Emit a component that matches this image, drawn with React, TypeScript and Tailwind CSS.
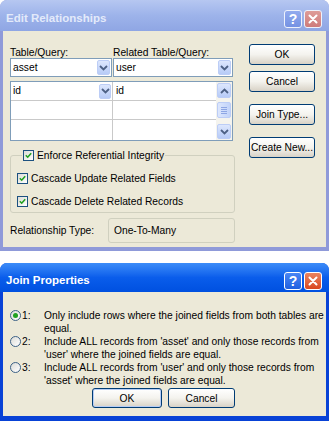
import React from 'react';

function Chevron({ up = false }: { up?: boolean }) {
  return (
    <svg width="9" height="6" viewBox="0 0 9 6">
      <path d={up ? 'M1 5 L4.5 1.5 L8 5' : 'M1 1 L4.5 4.5 L8 1'} fill="none" stroke="#4D6185" strokeWidth="1.8" />
    </svg>
  );
}

function ArrowBox({ up = false, className = '' }: { up?: boolean; className?: string }) {
  return (
    <div className={`rounded-[2px] border border-[#BCCDF6] bg-linear-to-b from-[#DDE7FD] to-[#B7CBF7] flex items-center justify-center ${className}`}>
      <Chevron up={up} />
    </div>
  );
}

function Combo({ value, className = '' }: { value: string; className?: string }) {
  return (
    <div className={`h-[19px] border border-[#7F9DB9] bg-white flex items-center pl-[2px] pr-[1px] ${className}`}>
      <span className="flex-1">{value}</span>
      <ArrowBox className="w-[13px] h-[15px]" />
    </div>
  );
}

function Check({ label }: { label: string }) {
  return (
    <div className="flex items-center h-[13px] gap-[3px]">
      <div className="w-[11px] h-[11px] border border-[#1C5180] bg-linear-to-br from-[#DCDCD7] to-white flex items-center justify-center shrink-0">
        <svg width="7" height="7" viewBox="0 0 7 7">
          <path d="M0.8 3.3 L2.7 5.2 L6.2 1.2" fill="none" stroke="#21A121" strokeWidth="1.6" />
        </svg>
      </div>
      <span className="whitespace-nowrap">{label}</span>
    </div>
  );
}

function Radio({ on = false }: { on?: boolean }) {
  return (
    <div className="w-[11px] h-[11px] mt-[1px] rounded-full border border-[#3D6287] bg-linear-to-br from-[#DCDCD7] to-white flex items-center justify-center shrink-0">
      {on && <div className="w-[5px] h-[5px] rounded-full bg-[#21A121]" />}
    </div>
  );
}

function XpBtn({ className = '', children }: { className?: string; children: React.ReactNode }) {
  return (
    <div className={`rounded-[3px] border border-[#003C74] bg-linear-to-b from-white via-[#F4F3EE] to-[#D8D2C6] flex items-center justify-center whitespace-nowrap ${className}`}>
      {children}
    </div>
  );
}

function TitleBtns({ active }: { active: boolean }) {
  return (
    <div className="flex gap-[2px]">
      <div className={active ? 'w-[18px] h-[18px] rounded-[3px] border border-white bg-linear-to-b from-[#4A86F4] to-[#1F5FE0] flex items-center justify-center text-white font-bold text-[14px] leading-none' : 'w-[18px] h-[18px] rounded-[3px] border border-[#EEF2FC] bg-linear-to-b from-[#92ABEE] to-[#7592E3] flex items-center justify-center text-white font-bold text-[14px] leading-none'}>
        ?
      </div>
      <div className={active ? 'w-[18px] h-[18px] rounded-[3px] border border-white bg-linear-to-b from-[#E9835F] to-[#D9461E] flex items-center justify-center' : 'w-[18px] h-[18px] rounded-[3px] border border-[#EEF2FC] bg-linear-to-b from-[#DE9C98] to-[#CE7B7B] flex items-center justify-center'}>
        <svg width="10" height="10" viewBox="0 0 10 10">
          <path d="M1.5 1.5 L8.5 8.5 M8.5 1.5 L1.5 8.5" stroke="white" strokeWidth="2" strokeLinecap="round" />
        </svg>
      </div>
    </div>
  );
}

export default function App() {
  return (
    <div className="w-[331px] h-[421px] bg-white overflow-hidden text-[10.25px] text-black font-['Liberation_Sans',Arial,sans-serif]">
      {/* Edit Relationships (inactive) */}
      <div className="w-[329px] h-[251px] rounded-t-[7px] bg-[#8F9AD9] flex flex-col overflow-hidden">
        <div className="h-[31px] shrink-0 bg-linear-to-b from-[#B6C7F1] via-[#9DB3EA] to-[#8FA6E4] flex items-center pl-[6px] pr-[7px] pt-[6px]">
          <span className="flex-1 text-[11.5px] font-bold text-[#E3EAFA]">Edit Relationships</span>
          <TitleBtns active={false} />
        </div>
        <div className="flex-1 mx-[3px] mb-[4px] bg-[#ECE9D8] flex pl-[7px]">
          <div className="w-[225px] flex flex-col">
            <div className="mt-[17px] h-[10px] leading-[10px] flex">
              <span className="w-[103px]">Table/Query:</span>
              <span>Related Table/Query:</span>
            </div>
            <div className="flex gap-[1px]">
              <Combo value="asset" className="w-[102px]" />
              <Combo value="user" className="w-[120px]" />
            </div>
            <div className="mt-[4px] w-[223px] h-[60px] border border-[#7F9DB9] bg-white flex">
              <div className="w-[101px] flex flex-col">
                <div className="h-[19px] border-b border-[#C9C9C9] flex items-center pl-[2px] pr-[1px]">
                  <span className="flex-1">id</span>
                  <ArrowBox className="w-[12px] h-[15px]" />
                </div>
                <div className="h-[19px] border-b border-[#C9C9C9]" />
                <div className="h-[19px]" />
              </div>
              <div className="w-[104px] border-l border-[#C9C9C9] flex flex-col">
                <div className="h-[19px] border-b border-[#C9C9C9] flex items-center pl-[3px]">id</div>
                <div className="h-[19px] border-b border-[#C9C9C9]" />
                <div className="h-[19px]" />
              </div>
              <div className="w-[16px] bg-[#F5F4EE] flex flex-col items-center py-[1px]">
                <ArrowBox up className="w-[14px] h-[15px]" />
                <div className="mt-[4px] w-[14px] h-[16px] rounded-[2px] border border-[#BCCDF6] bg-linear-to-r from-[#DDE7FD] to-[#C2D3F9] flex flex-col items-center justify-center gap-[1px]">
                  <div className="w-[6px] h-[1px] bg-[#8EA6E4]" />
                  <div className="w-[6px] h-[1px] bg-[#8EA6E4]" />
                  <div className="w-[6px] h-[1px] bg-[#8EA6E4]" />
                  <div className="w-[6px] h-[1px] bg-[#8EA6E4]" />
                </div>
                <div className="flex-1" />
                <ArrowBox className="w-[14px] h-[15px]" />
              </div>
            </div>
            <fieldset className="mt-[8px] w-[225px] border border-[#D0D0BF] rounded-[3px] pl-[6px] pb-[4px]">
              <legend className="ml-[5px] px-[1px]">
                <Check label="Enforce Referential Integrity" />
              </legend>
              <div className="mt-[10px]">
                <Check label="Cascade Update Related Fields" />
              </div>
              <div className="mt-[10px]">
                <Check label="Cascade Delete Related Records" />
              </div>
            </fieldset>
            <div className="mt-[5px] h-[25px] flex items-center">
              <span className="w-[98px]">Relationship Type:</span>
              <div className="w-[127px] h-[25px] border border-[#D0D0BF] rounded-[3px] flex items-center pl-[5px]">
                One-To-Many
              </div>
            </div>
          </div>
          <div className="ml-[14px] pt-[13px] flex flex-col">
            <XpBtn className="w-[66px] h-[21px]">OK</XpBtn>
            <XpBtn className="mt-[6px] w-[66px] h-[21px]">Cancel</XpBtn>
            <XpBtn className="mt-[12px] w-[66px] h-[21px]">Join Type...</XpBtn>
            <XpBtn className="mt-[12px] w-[66px] h-[21px]">Create New...</XpBtn>
          </div>
        </div>
      </div>

      {/* Join Properties (active) */}
      <div className="mt-[12px] w-[329px] h-[158px] rounded-t-[7px] bg-[#0842D6] flex flex-col overflow-hidden">
        <div className="h-[29px] shrink-0 bg-linear-to-b from-[#3C8CF8] via-[#0A5DEB] to-[#0050E0] flex items-center pl-[6px] pr-[7px] pt-[6px]">
          <span className="flex-1 text-[11.5px] font-bold text-white">Join Properties</span>
          <TitleBtns active />
        </div>
        <div className="flex-1 mx-[3px] mb-[5px] bg-[#ECE9D8] flex flex-col pl-[7px] pt-[17px] leading-[13px]">
          <div className="flex items-start">
            <Radio on />
            <span className="ml-[1px] w-[22px]">1:</span>
            <div className="whitespace-nowrap">
              <div>Only include rows where the joined fields from both tables are</div>
              <div>equal.</div>
            </div>
          </div>
          <div className="flex items-start">
            <Radio />
            <span className="ml-[1px] w-[22px]">2:</span>
            <div className="whitespace-nowrap">
              <div>Include ALL records from 'asset' and only those records from</div>
              <div>'user' where the joined fields are equal.</div>
            </div>
          </div>
          <div className="flex items-start">
            <Radio />
            <span className="ml-[1px] w-[22px]">3:</span>
            <div className="whitespace-nowrap">
              <div>Include ALL records from 'user' and only those records from</div>
              <div>'asset' where the joined fields are equal.</div>
            </div>
          </div>
          <div className="mt-[1px] ml-[82px] flex gap-[6px]">
            <XpBtn className="w-[70px] h-[20px] shadow-[inset_0_0_0_1px_#B6CDF5]">OK</XpBtn>
            <XpBtn className="w-[67px] h-[20px]">Cancel</XpBtn>
          </div>
        </div>
      </div>
    </div>
  );
}
